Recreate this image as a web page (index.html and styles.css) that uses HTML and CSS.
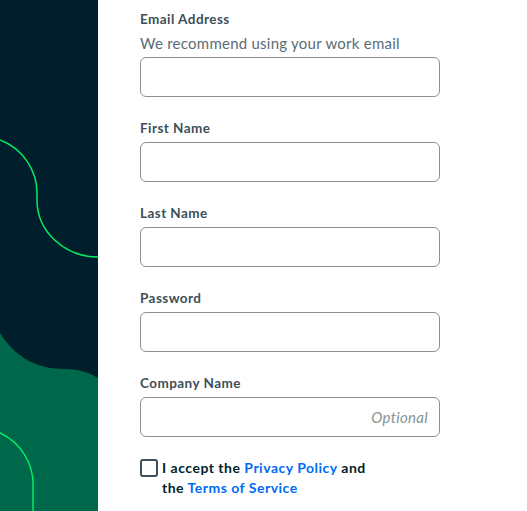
FILE: index.html
```html
<!DOCTYPE html>
<html>
<head>
  <meta charset="UTF-8">
  <title>Sign Up</title>
  <link rel="stylesheet" href="styles.css">
</head>
<body>
  <div class="page">
    <div class="side">
      <svg class="side-art" viewBox="0 0 98 511" width="98" height="511">
        <rect x="0" y="0" width="98" height="511" fill="#001e2b"/>
        <path d="M0 333 C14 356 36 369 64 369 C78 369 88 372 98 378 L98 511 L0 511 Z" fill="#00684a"/>
        <path d="M0 140 A57 57 0 0 1 37 195 L37 200 A61 57 0 0 0 98 257" fill="none" stroke="#00ed64" stroke-width="1.5"/>
        <path d="M0 433 A57 57 0 0 1 33 488 L33 511" fill="none" stroke="#00ed64" stroke-width="1.5"/>
      </svg>
    </div>

    <form class="signup">
      <div class="field">
        <label for="email">Email Address</label>
        <p class="hint">We recommend using your work email</p>
        <input type="email" id="email" name="email">
      </div>

      <div class="field">
        <label for="first">First Name</label>
        <input type="text" id="first" name="first">
      </div>

      <div class="field">
        <label for="last">Last Name</label>
        <input type="text" id="last" name="last">
      </div>

      <div class="field">
        <label for="password">Password</label>
        <input type="password" id="password" name="password">
      </div>

      <div class="field">
        <label for="company">Company Name</label>
        <input type="text" id="company" name="company" placeholder="Optional" class="optional">
      </div>

      <div class="terms">
        <input type="checkbox" id="accept" class="check">
        <label for="accept">I accept the <a href="#">Privacy Policy</a> and<br>the <a href="#">Terms of Service</a></label>
      </div>
    </form>
  </div>
</body>
</html>
```

FILE: styles.css
```css
body {
  margin: 0;
  font-family: Lato, "Open Sans", sans-serif;
  background: white;
  overflow: hidden;
}

.page {
  display: flex;
  height: 511px;
}

.side {
  width: 98px;
  flex-shrink: 0;
  background: #001e2b;
}

.side-art {
  display: block;
}

.signup {
  padding: 9px 0 0 42px;
  width: 300px;
}

.field {
  margin-bottom: 21px;
}

.field label {
  display: block;
  font-size: 13.5px;
  font-weight: bold;
  letter-spacing: 0.45px;
  line-height: 20px;
  margin-bottom: 4px;
  color: #3d4f58;
}

.hint {
  margin: -2px 0 2px;
  font-size: 15px;
  letter-spacing: 0.25px;
  line-height: 24px;
  color: #5c6c75;
}

.field input {
  display: block;
  box-sizing: border-box;
  width: 300px;
  height: 40px;
  padding: 0 11px;
  border: 1px solid #889397;
  border-radius: 6px;
  font-family: inherit;
  font-size: 15px;
}

.optional {
  text-align: right;
}

.optional::placeholder {
  font-style: italic;
  letter-spacing: 0.3px;
  color: #889397;
}

.terms {
  display: flex;
  align-items: flex-start;
  gap: 4px;
}

.check {
  appearance: none;
  box-sizing: border-box;
  width: 18px;
  height: 18px;
  margin: 1px 0 0;
  border: 2px solid #3d4f58;
  border-radius: 3px;
  flex-shrink: 0;
}

.terms label {
  font-size: 14px;
  font-weight: bold;
  letter-spacing: 0.5px;
  line-height: 20px;
  color: #001e2b;
}

.terms a {
  color: #016bf8;
  text-decoration: none;
}
```
